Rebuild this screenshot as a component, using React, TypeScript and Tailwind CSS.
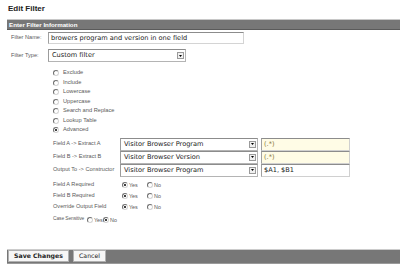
import React from "react";

const Radio = ({ checked = false }: { checked?: boolean }) => (
  <span className="relative inline-block w-[6px] h-[6px] shrink-0 rounded-full border border-t-[#6f6f6f] border-l-[#6f6f6f] border-r-[#d4d4d4] border-b-[#d4d4d4] bg-white">
    {checked && (
      <span className="absolute left-[1px] top-[1px] w-[2px] h-[2px] rounded-full bg-black" />
    )}
  </span>
);

const Arrow = () => (
  <span className="flex items-center justify-center w-[7px] h-[7px] border border-[#9a9a9a] bg-[#f0f0f0] shrink-0">
    <svg width="3" height="2" viewBox="0 0 3 2">
      <path d="M0 0H3L1.5 2Z" fill="#000" />
    </svg>
  </span>
);

const Select = ({ text, w }: { text: string; w: string }) => (
  <div
    className={`${w} h-[13px] flex items-center justify-between bg-white border border-[#b4b4b4] border-t-[#8c8c8c] border-l-[#9c9c9c] pl-[3px] pr-[1px] font-['DejaVu_Sans',sans-serif] text-[6.6px] text-[#222] leading-none`}
  >
    <span className="whitespace-nowrap">{text}</span>
    <Arrow />
  </div>
);

const TextBox = ({ text, yellow = false }: { text: string; yellow?: boolean }) => (
  <div
    className={`w-[89px] h-[13px] flex items-center border border-[#d0d0d0] border-t-[#8c8c8c] border-l-[#a0a0a0] pl-[2px] font-['DejaVu_Sans',sans-serif] text-[6.6px] leading-none ${
      yellow ? "bg-[#fffce6] text-[#8a7a3a]" : "bg-white text-[#222]"
    }`}
  >
    {text}
  </div>
);

const radioItems = [
  "Exclude",
  "Include",
  "Lowercase",
  "Uppercase",
  "Search and Replace",
  "Lookup Table",
  "Advanced",
];

const YesNo = ({ label }: { label: string }) => (
  <div className="h-[11px] flex items-center">
    <span className="w-[69px] shrink-0 text-[5.6px] text-[#5a5a5a] whitespace-nowrap">{label}</span>
    <Radio checked />
    <span className="ml-[1px] w-[18px] text-[5.4px] text-[#5a5a5a] translate-y-[1px]">Yes</span>
    <Radio />
    <span className="ml-[1px] text-[5.4px] text-[#5a5a5a] translate-y-[1px]">No</span>
  </div>
);

export default function App() {
  return (
    <div className="w-[400px] h-[280px] bg-white overflow-hidden font-['Liberation_Sans',Arial,sans-serif] leading-none">
      <div className="h-[19px] pl-[8px] pt-[4px] text-[8px] leading-[10px] font-bold text-[#222]">
        Edit Filter
      </div>
      <div className="ml-[7px] h-[11px] bg-[#777777] border-t border-t-[#c8c8c8] border-b border-b-[#5a5a5a] pl-[2px] text-white font-bold text-[6.2px] leading-[9px]">
        Enter Filter Information
      </div>

      <div className="mt-[2px] h-[12px] flex items-center">
        <span className="w-[48px] shrink-0 pl-[11px] text-[5.6px] text-[#5a5a5a] whitespace-nowrap">Filter Name:</span>
        <div className="w-[196px] h-[12px] flex items-center bg-white border border-[#d4d4d4] border-t-[#8c8c8c] border-l-[#a0a0a0] pl-[2px] font-['DejaVu_Sans',sans-serif] text-[6.6px] text-[#222]">
          browers program and version in one field
        </div>
      </div>

      <div className="mt-[5px] h-[13px] flex items-center">
        <span className="w-[48px] shrink-0 pl-[11px] text-[5.6px] text-[#5a5a5a] whitespace-nowrap">Filter Type:</span>
        <Select text="Custom filter" w="w-[138px]" />
      </div>

      <div className="mt-[6.5px] pl-[53px] flex flex-col">
        {radioItems.map((t, i) => (
          <div key={t} className="h-[9.5px] flex items-center gap-[4px]">
            <Radio checked={i === radioItems.length - 1} />
            <span className="text-[5.7px] text-[#5a5a5a] whitespace-nowrap">{t}</span>
          </div>
        ))}
      </div>

      <div className="mt-[2.5px] pl-[53px] flex flex-col">
        <div className="h-[13px] flex items-center">
          <span className="w-[67px] shrink-0 text-[5.6px] text-[#5a5a5a] whitespace-nowrap">Field A -&gt; Extract A</span>
          <Select text="Visitor Browser Program" w="w-[138px]" />
          <div className="ml-[3px]">
            <TextBox text="(.*)" yellow />
          </div>
        </div>
        <div className="h-[13px] flex items-center">
          <span className="w-[67px] shrink-0 text-[5.6px] text-[#5a5a5a] whitespace-nowrap">Field B -&gt; Extract B</span>
          <Select text="Visitor Browser Version" w="w-[138px]" />
          <div className="ml-[3px]">
            <TextBox text="(.*)" yellow />
          </div>
        </div>
        <div className="h-[13px] flex items-center">
          <span className="w-[67px] shrink-0 text-[5.6px] text-[#5a5a5a] whitespace-nowrap">Output To -&gt; Constructor</span>
          <Select text="Visitor Browser Program" w="w-[138px]" />
          <div className="ml-[3px]">
            <TextBox text="$A1, $B1" />
          </div>
        </div>

        <div className="mt-[2.5px] flex flex-col">
          <YesNo label="Field A Required" />
          <YesNo label="Field B Required" />
          <YesNo label="Override Output Field" />
        </div>

        <div className="mt-[2px] h-[11px] flex items-center">
          <span className="w-[34px] shrink-0 text-[4.9px] tracking-[-0.1px] text-[#5a5a5a] whitespace-nowrap">Case Sensitive</span>
          <Radio />
          <span className="ml-[1px] w-[9px] shrink-0 text-[5.4px] text-[#5a5a5a] translate-y-[1px]">Yes</span>
          <Radio checked />
          <span className="ml-[1px] text-[5.4px] text-[#5a5a5a] translate-y-[1px]">No</span>
        </div>
      </div>

      <div className="mt-[23.5px] ml-[7px] h-[15px] flex items-center gap-[4px] pl-[1px] bg-[#777777] border-t border-t-[#cccccc] border-b border-b-[#9a9a9a]">
        <button className="w-[61px] h-[12px] bg-[#f6f6f6] border border-[#b0b0b0] font-['DejaVu_Sans',sans-serif] font-bold text-[6.2px] text-[#222] leading-none">
          Save Changes
        </button>
        <button className="w-[33px] h-[12px] bg-[#f6f6f6] border border-[#b0b0b0] font-['DejaVu_Sans',sans-serif] text-[6.2px] text-[#222] leading-none">
          Cancel
        </button>
      </div>
    </div>
  );
}
